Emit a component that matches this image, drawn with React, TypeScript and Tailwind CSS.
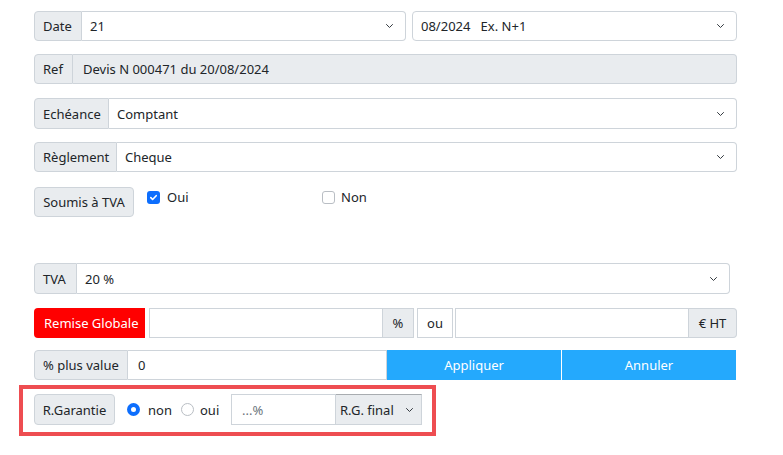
import React from 'react';

const Chevron = () => (
  <svg width="11" height="8" viewBox="0 0 16 16" className="shrink-0">
    <path d="M2 5l6 6 6-6" fill="none" stroke="#343a40" strokeWidth="2" strokeLinecap="round" strokeLinejoin="round" />
  </svg>
);

const Addon: React.FC<{ children: React.ReactNode; className?: string }> = ({ children, className = '' }) => (
  <div className={`flex items-center px-2 bg-[#e9ecef] border border-[#ced4da] text-[#212529] whitespace-nowrap ${className}`}>
    {children}
  </div>
);

const Select: React.FC<{ value: string; className?: string }> = ({ value, className = '' }) => (
  <div className={`flex items-center justify-between pl-2 pr-[10px] bg-white border border-[#ced4da] text-[#212529] ${className}`}>
    <span className="whitespace-pre">{value}</span>
    <Chevron />
  </div>
);

const Checkbox: React.FC<{ checked?: boolean }> = ({ checked }) =>
  checked ? (
    <span className="w-[13px] h-[13px] rounded-[3px] bg-[#0d6efd] flex items-center justify-center">
      <svg width="9" height="9" viewBox="0 0 10 10">
        <path d="M2 5.2l2 2 4-4.2" fill="none" stroke="white" strokeWidth="1.8" strokeLinecap="round" strokeLinejoin="round" />
      </svg>
    </span>
  ) : (
    <span className="w-[13px] h-[13px] rounded-[3px] border border-[#b9bec4] bg-white" />
  );

const Radio: React.FC<{ checked?: boolean }> = ({ checked }) =>
  checked ? (
    <span className="w-[13px] h-[13px] rounded-full bg-[#0d6efd] flex items-center justify-center">
      <span className="w-[5px] h-[5px] rounded-full bg-white" />
    </span>
  ) : (
    <span className="w-[13px] h-[13px] rounded-full border border-[#b9bec4] bg-white" />
  );

export default function App() {
  return (
    <div
      className="w-[783px] h-[455px] bg-white text-[13px] leading-[20px] text-[#212529] pl-[34px] pr-[46px] pt-[11px]"
      style={{ fontFamily: '"Noto Sans", Lato, sans-serif' }}
    >
      {/* Date */}
      <div className="flex h-[30px] gap-[6px]">
        <div className="flex w-[372px]">
          <Addon className="rounded-l-[4px] w-[48px]">Date</Addon>
          <Select value="21" className="flex-1 border-l-0 rounded-r-[4px]" />
        </div>
        <Select value="08/2024   Ex. N+1" className="flex-1 rounded-[4px]" />
      </div>

      {/* Ref */}
      <div className="flex h-[30px] mt-[13px]">
        <Addon className="rounded-l-[4px] w-[39px]">Ref</Addon>
        <div className="flex-1 flex items-center px-[10px] bg-[#e9ecef] border border-l-0 border-[#ced4da] rounded-r-[4px]">
          Devis N 000471 du 20/08/2024
        </div>
      </div>

      {/* Echéance */}
      <div className="flex h-[31px] mt-[14px]">
        <Addon className="rounded-l-[4px] w-[75px]">Echéance</Addon>
        <Select value="Comptant" className="flex-1 border-l-0 rounded-r-[4px]" />
      </div>

      {/* Règlement */}
      <div className="flex h-[30px] mt-[13px]">
        <Addon className="rounded-l-[4px] w-[83px]">Règlement</Addon>
        <Select value="Cheque" className="flex-1 border-l-0 rounded-r-[4px]" />
      </div>

      {/* Soumis à TVA */}
      <div className="flex mt-[15px] h-[30px]">
        <Addon className="rounded-[4px] w-[100px] justify-center">Soumis à TVA</Addon>
        <div className="flex items-center gap-[7px] ml-[13px] w-[175px] self-start">
          <Checkbox checked />
          <span>Oui</span>
        </div>
        <div className="flex items-center gap-[6px] self-start">
          <Checkbox />
          <span>Non</span>
        </div>
      </div>

      {/* TVA */}
      <div className="flex h-[31px] mt-[46px] mr-[7px]">
        <Addon className="rounded-l-[4px] w-[43px]">TVA</Addon>
        <Select value="20 %" className="flex-1 border-l-0 rounded-r-[4px]" />
      </div>

      {/* Remise globale */}
      <div className="flex h-[30px] mt-[14px]">
        <div className="flex items-center px-[10px] bg-[#ff0000] text-white rounded-l-[4px] w-[111px] whitespace-nowrap">Remise Globale</div>
        <div className="ml-[4px] w-[234px] bg-white border border-[#ced4da]" />
        <Addon className="w-[31px] justify-center border-l-0">%</Addon>
        <div className="ml-[3px] w-[36px] flex items-center justify-center border border-[#ced4da]">ou</div>
        <div className="ml-[2px] flex-1 bg-white border border-[#ced4da]" />
        <Addon className="w-[48px] justify-center border-l-0 rounded-r-[4px]">€ HT</Addon>
      </div>

      {/* % plus value */}
      <div className="flex h-[30px] mt-[12px] mr-[1px]">
        <Addon className="rounded-l-[4px] w-[94px]">% plus value</Addon>
        <div className="w-[259px] flex items-center px-[10px] bg-white border border-l-0 border-[#ced4da]">0</div>
        <div className="w-[174px] flex items-center justify-center bg-[#24a9fd] text-white">Appliquer</div>
        <div className="ml-[1px] flex-1 flex items-center justify-center bg-[#24a9fd] text-white">Annuler</div>
      </div>

      {/* R.Garantie */}
      <div className="mt-[5px] -ml-[15px] w-[417px] h-[51px] border-[4px] border-[#ee4d51] flex items-start pl-[11px] pt-[5px]">
        <Addon className="rounded-[4px] w-[81px] h-[31px] justify-center">R.Garantie</Addon>
        <div className="flex items-center h-[31px] ml-[12px] w-[54px] gap-[8px]">
          <Radio checked />
          <span>non</span>
        </div>
        <div className="flex items-center h-[31px] w-[50px] gap-[6px]">
          <Radio />
          <span>oui</span>
        </div>
        <div className="w-[105px] h-[31px] flex items-center pl-[10px] border border-[#ced4da] text-[#6c757d]">...%</div>
        <div className="w-[86px] h-[31px] flex items-center justify-between pl-[4px] pr-[6px] bg-[#e9ecef] border border-l-0 border-[#ced4da] border-t-[#a8acb0]">
          <span>R.G. final</span>
          <Chevron />
        </div>
      </div>
    </div>
  );
}
